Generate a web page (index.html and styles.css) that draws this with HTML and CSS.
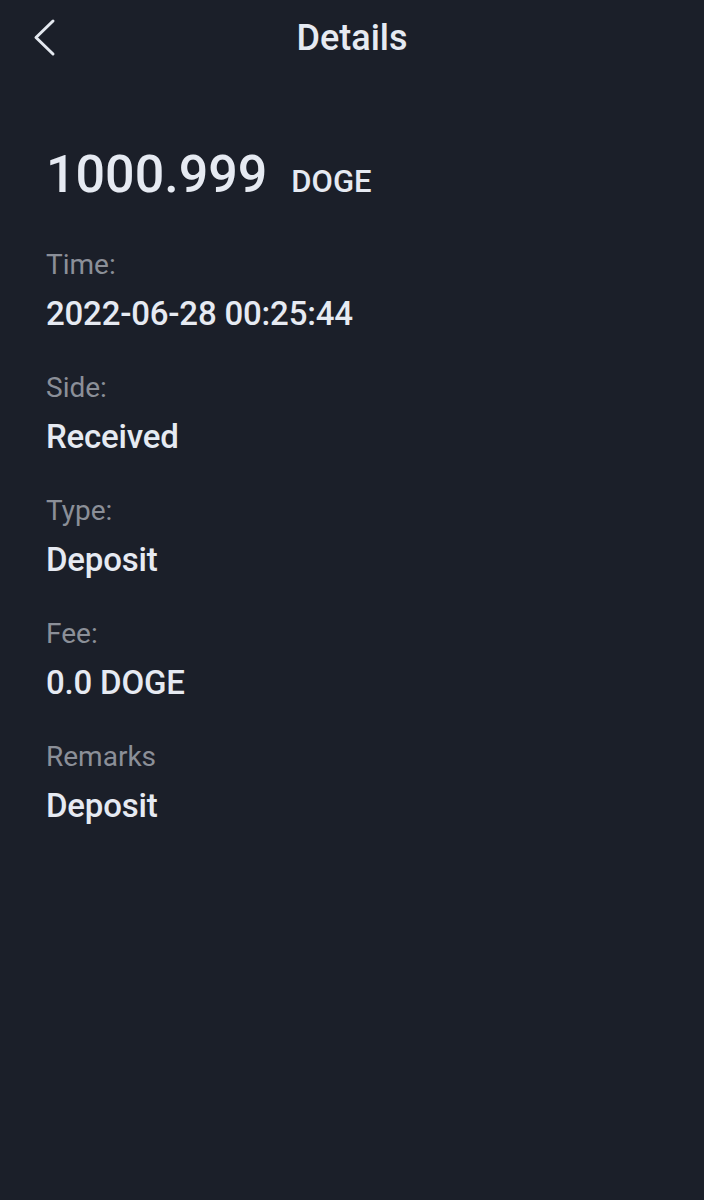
FILE: index.html
```html
<!DOCTYPE html>
<html lang="en">
<head>
    <meta charset="UTF-8">
    <title>Details</title>
    <link rel="stylesheet" href="styles.css">
</head>
<body>

<div class="header">
    <a class="back" href="#">
        <svg width="32" height="40" viewBox="0 0 32 40">
            <polyline points="25,3 8,19.5 25,36" fill="none" stroke="#e4e8ef" stroke-width="3" stroke-linecap="round" stroke-linejoin="round"/>
        </svg>
    </a>
    <h1>Details</h1>
    <div></div>
</div>

<div class="details">
    <div class="amount">
        <span class="amount-value">1000.999</span>
        <span class="amount-coin">DOGE</span>
    </div>

    <div class="row">
        <div class="label">Time:</div>
        <div class="value">2022-06-28 00:25:44</div>
    </div>
    <div class="row">
        <div class="label">Side:</div>
        <div class="value">Received</div>
    </div>
    <div class="row">
        <div class="label">Type:</div>
        <div class="value">Deposit</div>
    </div>
    <div class="row">
        <div class="label">Fee:</div>
        <div class="value">0.0 DOGE</div>
    </div>
    <div class="row">
        <div class="label">Remarks</div>
        <div class="value">Deposit</div>
    </div>
</div>

</body>
</html>
```

FILE: styles.css
```css
body {
    margin: 0;
    font-family: Roboto, 'Liberation Sans', sans-serif;
    background: #1b1f29;
    color: #e6eaf2;
    min-height: 100vh;
}

.header {
    display: grid;
    grid-template-columns: 1fr auto 1fr;
    align-items: center;
    height: 76px;
}

.back {
    display: flex;
    margin-left: 28px;
}

.header h1 {
    margin: 0;
    font-size: 36px;
    font-weight: 500;
    line-height: 76px;
    color: #e6eaf2;
}

.details {
    padding: 67px 46px 0;
}

.amount {
    display: flex;
    align-items: baseline;
    gap: 24px;
    line-height: 64px;
    margin-bottom: 34px;
}

.amount-value {
    font-size: 52px;
    font-weight: 500;
}

.amount-coin {
    font-size: 31px;
    font-weight: 500;
}

.row {
    margin-bottom: 37px;
}

.label {
    font-size: 28px;
    line-height: 34px;
    color: #8b8f98;
}

.value {
    margin-top: 12px;
    font-size: 33px;
    line-height: 40px;
    font-weight: 500;
    letter-spacing: -0.2px;
}
```
